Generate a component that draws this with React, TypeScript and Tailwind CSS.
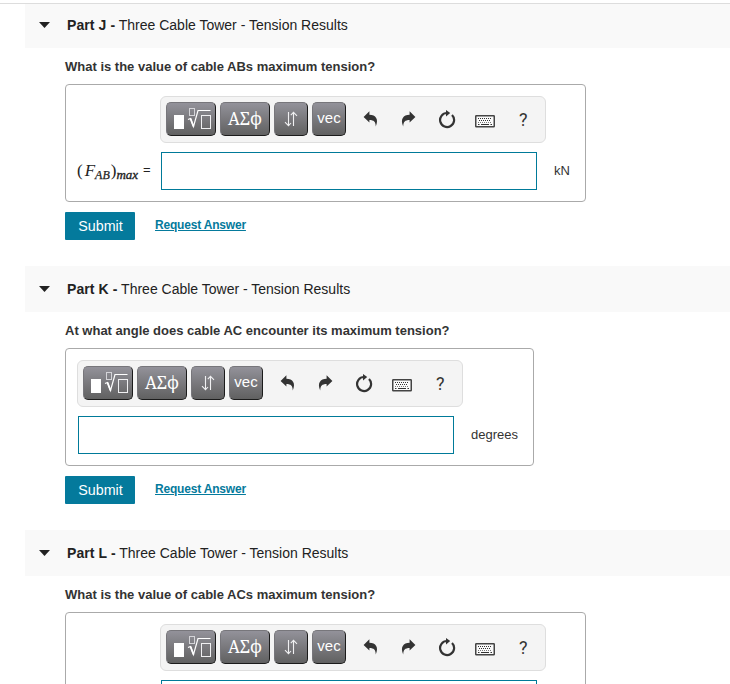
import React from "react";

const SANS = "font-['Liberation_Sans',Arial,sans-serif]";

const keyClass =
  "flex h-[34px] shrink-0 items-center justify-center rounded-[5px] border border-t-[#77767b] border-l-[#77767b] border-r-[#1b1b1b] border-b-[#1b1b1b] bg-linear-to-b from-[#93929a] to-[#616161] text-white";

function TemplateIcon() {
  return (
    <svg className="shrink-0" width="40" height="24" viewBox="0 0 40 24" fill="none">
      <rect x="3" y="8" width="10" height="14" fill="#fff" />
      <rect x="18.5" y="1.5" width="5" height="7" stroke="#d4d4d8" />
      <path d="M17 12.5 L19.5 11.5 L22.5 19.5 L27 3.5 H39.5" stroke="#fff" strokeWidth="1.2" />
      <path d="M19.5 11.5 L22.5 19.5" stroke="#fff" strokeWidth="1.8" />
      <rect x="30.5" y="8.5" width="9" height="13" stroke="#f0f0f2" />
    </svg>
  );
}

function ArrowsIcon() {
  return (
    <svg width="14" height="16" viewBox="0 0 14 16" fill="none" stroke="#f0f0f2" strokeWidth="1.1">
      <path d="M4.5 1 V14.5 M1 11.2 L4.5 14.7 L7 12" />
      <path d="M9.5 15 V1.5 M6.8 4.2 L9.5 1.3 L13 4.8" />
    </svg>
  );
}

function UndoIcon() {
  return (
    <svg width="16" height="16" viewBox="0 0 16 16" fill="#333">
      <path d="M.6 6 L6.4 .3 V3.8 C12.8 3.8 16 8.4 12.8 15.4 C12.6 10.6 11 9 6.4 8.9 V11.6 Z" />
    </svg>
  );
}

function RedoIcon() {
  return (
    <svg width="16" height="16" viewBox="0 0 16 16" fill="#333">
      <path d="M15.4 6 L9.6 .3 V3.8 C3.2 3.8 0 8.4 3.2 15.4 C3.4 10.6 5 9 9.6 8.9 V11.6 Z" />
    </svg>
  );
}

function ResetIcon() {
  return (
    <svg width="18" height="20" viewBox="0 0 18 20" fill="none">
      <path d="M14 6 A7 7 0 1 1 9 4" stroke="#333" strokeWidth="2.2" />
      <path d="M8 1 L12.2 4.1 L8 7.4 Z" fill="#333" />
    </svg>
  );
}

function KeyboardIcon() {
  return (
    <svg width="20" height="14" viewBox="0 0 20 14" fill="none">
      <rect x=".75" y="1.75" width="18.5" height="11" rx=".6" fill="#fafafa" stroke="#444" strokeWidth="1.5" />
      <path d="M3 4.5 H17" stroke="#333" strokeDasharray="1 1" />
      <path d="M4 6.5 H16" stroke="#333" strokeDasharray="1 1" />
      <path d="M3 8.5 H17" stroke="#777" strokeDasharray="1 1" />
      <path d="M3 10.5 H4.5 M6 10.5 H14 M15.5 10.5 H17" stroke="#333" />
    </svg>
  );
}

function Toolbar() {
  return (
    <div className="flex h-[47px] w-[386px] items-start rounded-md border border-[#dedede] bg-[#f4f4f4] pt-[5px] pl-[5px]">
      <div className="flex gap-1">
        <button className={`${keyClass} w-[50px]`}><TemplateIcon /></button>
        <button className={`${keyClass} w-[50px] pb-0.5`}>
          <svg width="36" height="22" viewBox="0 0 36 22">
            <text x="1" y="17.5" textLength="34" lengthAdjust="spacingAndGlyphs" fill="#fff" fontSize="18" fontFamily="Noto Serif, DejaVu Serif, serif">ΑΣϕ</text>
          </svg>
        </button>
        <button className={`${keyClass} w-[34px]`}><ArrowsIcon /></button>
        <button className={`${keyClass} w-[34px] pb-[3px] text-[15px] leading-5`}>vec</button>
      </div>
      <div className="flex h-[34px] items-center text-[#333]">
        <span className="ml-[17px]"><UndoIcon /></span>
        <span className="ml-[21px]"><RedoIcon /></span>
        <span className="ml-[22px]"><ResetIcon /></span>
        <span className="mt-1 ml-[19px]"><KeyboardIcon /></span>
        <span className="mt-px ml-6 font-['Roboto',sans-serif] text-[18px] leading-5">?</span>
      </div>
    </div>
  );
}

function Tension({ name }: { name: string }) {
  return (
    <span className="flex h-5 w-[84px] items-baseline font-['Liberation_Serif',serif] text-[17px] leading-5 whitespace-nowrap text-[#222]">
      <span>(</span>
      <i className="ml-0.5">F</i>
      <i className="relative top-[3px] text-[12px] [-webkit-text-stroke:0.25px_#222]">{name}</i>
      <span className="ml-px">)</span>
      <i className="relative top-[3px] text-[13px] [-webkit-text-stroke:0.35px_#222]">max</i>
      <span className="relative -top-0.5 ml-[5px] font-['Liberation_Sans',sans-serif] text-[13px]">=</span>
    </span>
  );
}

type PartProps = {
  letter: string;
  question: string;
  unit?: string;
  variable?: string;
  first?: boolean;
  partial?: boolean;
};

function Part({ letter, question, unit, variable, first, partial }: PartProps) {
  const wide = variable || partial;
  return (
    <section className={`shrink-0 ${first ? "h-[262px]" : "h-[264px]"}`}>
      <header className={`ml-[25px] flex items-center bg-[#f9f9f9] pl-3.5 text-[#222] ${first ? "h-11 pb-0.5" : "h-[46px]"}`}>
        <svg width="11" height="6" viewBox="0 0 11 6"><path d="M0 0 H11 L5.5 6 Z" fill="#222" /></svg>
        <h2 className="ml-[17px] text-[14px] leading-5"><b className="tracking-[0.08px]">Part {letter} -</b> Three Cable Tower - Tension Results</h2>
      </header>
      <div className="pl-[65px]">
        <p className="h-9 pt-2.5 text-[13px] leading-[18px] font-bold text-[#333]">{question}</p>
        <div className={`h-[118px] rounded-[4px] border border-[#aaa] pt-[11px] pl-[11px] ${wide ? "w-[521px]" : "w-[469px]"}`}>
          <div className={wide ? "pl-[83px]" : ""}><Toolbar /></div>
          <div className="mt-[9px] flex items-center">
            {variable ? <Tension name={variable} /> : <span className={partial ? "w-[84px]" : "w-px"} />}
            <input aria-label={question} className="h-[38px] w-[376px] border border-[#007a99] bg-white outline-none" />
            {unit && <span className="ml-[17px] text-[13px] text-[#333]">{unit}</span>}
          </div>
        </div>
        {!partial && (
          <div className="mt-2.5 flex h-7">
            <button className="h-7 w-[70px] rounded-[1px] bg-[#047a9c] pt-px pl-px text-[14.3px] text-white">Submit</button>
            <a href="#" className="ml-5 pt-[3px] text-[12px] leading-5 font-bold tracking-[-0.19px] text-[#047a9c] underline">Request Answer</a>
          </div>
        )}
      </div>
    </section>
  );
}

export default function App() {
  return (
    <main className={`flex h-[684px] w-[730px] flex-col overflow-hidden bg-white pt-[3px] ${SANS}`}>
      <div className="h-px shrink-0 bg-[#ddd]" />
      <Part first letter="J" question="What is the value of cable ABs maximum tension?" unit="kN" variable="AB" />
      <Part letter="K" question="At what angle does cable AC encounter its maximum tension?" unit="degrees" />
      <Part partial letter="L" question="What is the value of cable ACs maximum tension?" />
    </main>
  );
}
